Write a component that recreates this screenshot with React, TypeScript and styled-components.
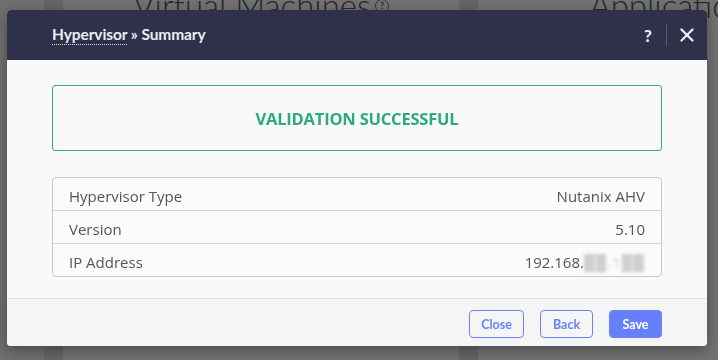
import * as React from 'react';
import styled, { createGlobalStyle } from 'styled-components';
import { X } from 'lucide-react';

const GlobalStyle = createGlobalStyle`
  html, body {
    margin: 0;
    padding: 0;
    width: 718px;
    height: 360px;
    overflow: hidden;
    background: #f4f4f4;
    font-family: 'Open Sans', 'Liberation Sans', sans-serif;
  }
`;

// dimmed page behind the dialog
const Page = styled.div`
  display: flex;
  height: 360px;
  padding-left: 44px;
  box-sizing: border-box;
  overflow: hidden;
`;

const Board = styled.div`
  display: flex;
  gap: 19px;
  padding-left: 19px;
  background: #dedede;
  flex: 1;
`;

const Card = styled.div`
  flex: 0 0 396px;
  background: #fbfbfb;
  display: flex;
  justify-content: center;
`;

const CardTitle = styled.div`
  margin-top: -15px;
  font-family: Lato, 'Liberation Sans', sans-serif;
  font-weight: 300;
  font-size: 33px;
  color: #555;
  display: flex;
  gap: 4px;
  height: 42px;
  white-space: nowrap;
`;

const HelpDot = styled.span`
  width: 12px;
  height: 12px;
  margin-top: 14px;
  border: 1.5px solid #666;
  border-radius: 50%;
  font-size: 9px;
  line-height: 12px;
  text-align: center;
  font-weight: 700;
`;

const Overlay = styled.div`
  position: fixed;
  inset: 0;
  background: rgba(0, 0, 0, 0.55);
  padding: 10px 0 0 7px;
`;

const Modal = styled.div`
  width: 700px;
  border-radius: 4px;
  overflow: hidden;
  box-shadow: 0 4px 14px rgba(0, 0, 0, 0.35);
  background: #f9f9f9;
`;

const Header = styled.div`
  height: 50px;
  box-sizing: border-box;
  background: #2f3049;
  display: flex;
  align-items: center;
  padding: 0 9px 3px 45px;
  color: #ececf2;
  font-family: Lato, 'Liberation Sans', sans-serif;
`;

const Title = styled.div`
  flex: 1;
  font-size: 15.5px;
  font-weight: 700;
  letter-spacing: -0.1px;
`;

const Crumb = styled.span`
  border-bottom: 1px dotted #dcdcdc;
  padding-bottom: 1px;
`;

const HeaderTools = styled.div`
  display: flex;
  align-items: center;
  padding-top: 3px;
`;

const HelpButton = styled.span`
  font-size: 17px;
  font-weight: 900;
  padding-right: 14px;
`;

const Divider = styled.span`
  width: 1px;
  height: 22px;
  background: #555770;
  margin-right: 9px;
`;

const Body = styled.div`
  padding: 25px 45px 21px;
  display: flex;
  flex-direction: column;
  gap: 26px;
`;

const Success = styled.div`
  height: 66px;
  box-sizing: border-box;
  border: 1px solid #3aa987;
  border-radius: 3px;
  display: flex;
  align-items: center;
  justify-content: center;
  color: #2ba97f;
  font-weight: 700;
  font-size: 16.5px;
  letter-spacing: -0.2px;
`;

const Table = styled.div`
  border: 1px solid #c8c8c8;
  border-radius: 4px;
  background: #fbfbfb;
`;

const Row = styled.div<{ $last?: boolean }>`
  height: 29px;
  display: flex;
  align-items: center;
  justify-content: space-between;
  padding: 3px 16px 0;
  border-bottom: ${(p) => (p.$last ? 'none' : '1px solid #d6d6d6')};
  color: #555;
  font-size: 15px;
`;

const Masked = styled.span`
  color: #d0d0d0;
  filter: blur(1.6px);
  letter-spacing: 1px;
`;

const Footer = styled.div`
  height: 48px;
  box-sizing: border-box;
  border-top: 1px solid #e2e2e2;
  background: #f5f5f5;
  display: flex;
  align-items: flex-start;
  justify-content: flex-end;
  gap: 16px;
  padding: 11px 45px 0 0;
`;

const Button = styled.button<{ $primary?: boolean; $w: number }>`
  width: ${(p) => p.$w}px;
  height: 28px;
  border-radius: 4px;
  border: 1px solid #6b84fb;
  background: ${(p) => (p.$primary ? '#6680fc' : 'transparent')};
  color: ${(p) => (p.$primary ? '#fff' : '#6b82f7')};
  font-family: Lato, 'Liberation Sans', sans-serif;
  font-weight: 700;
  font-size: 12.5px;
  padding: 0;
`;

const rows = [
  { label: 'Hypervisor Type', value: 'Nutanix AHV' },
  { label: 'Version', value: '5.10' },
];

export default function App() {
  return (
    <>
      <GlobalStyle />
      <Page>
        <Board>
          <Card>
            <CardTitle>
              Virtual Machines<HelpDot>?</HelpDot>
            </CardTitle>
          </Card>
          <Card>
            <CardTitle>Applications</CardTitle>
          </Card>
        </Board>
      </Page>
      <Overlay>
        <Modal>
          <Header>
            <Title>
              <Crumb>Hypervisor</Crumb> » Summary
            </Title>
            <HeaderTools>
              <HelpButton>?</HelpButton>
              <Divider />
              <X size={22} strokeWidth={2.6} />
            </HeaderTools>
          </Header>
          <Body>
            <Success>VALIDATION SUCCESSFUL</Success>
            <Table>
              {rows.map((r) => (
                <Row key={r.label}>
                  <span>{r.label}</span>
                  <span>{r.value}</span>
                </Row>
              ))}
              <Row $last>
                <span>IP Address</span>
                <span>
                  192.168.<Masked>██.1██</Masked>
                </span>
              </Row>
            </Table>
          </Body>
          <Footer>
            <Button $w={55}>Close</Button>
            <Button $w={53}>Back</Button>
            <Button $w={53} $primary>
              Save
            </Button>
          </Footer>
        </Modal>
      </Overlay>
    </>
  );
}
